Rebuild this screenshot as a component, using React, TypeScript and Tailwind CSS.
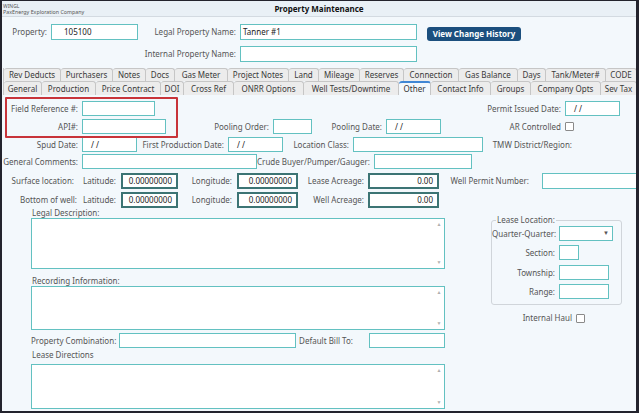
import React from "react";

type P = { className?: string; children?: React.ReactNode };

const Lbl = ({ className = "", children }: P) => (
  <div className={`shrink-0 whitespace-nowrap text-right text-[#555] ${className}`}>{children}</div>
);

const Inp = ({ className = "", children }: P) => (
  <div
    className={`shrink-0 h-full flex items-center bg-white border border-[#63c1c1] text-[#222] whitespace-nowrap ${className}`}
  >
    {children}
  </div>
);

const Num = ({ className = "", children }: P) => (
  <div
    className={`shrink-0 h-full flex items-center justify-end pr-[4px] bg-white border-2 border-[#3c7474] text-[#222] ${className}`}
  >
    {children}
  </div>
);

const Check = ({ className = "" }: P) => (
  <div className={`shrink-0 w-[9px] h-[9px] bg-white border border-[#8a8a8a] rounded-[1px] ${className}`} />
);

const Area = ({ className = "" }: P) => (
  <div className={`w-[414px] shrink-0 flex justify-end bg-white border border-[#63c1c1] ${className}`}>
    <div className="w-[10px] flex flex-col items-center justify-between py-[3px] text-[5px] leading-none text-[#b0b0b0]">
      <span>▲</span>
      <span>▼</span>
    </div>
  </div>
);

const tabsTop: [string, string][] = [
  ["Rev Deducts", "w-[57px]"],
  ["Purchasers", "w-[52px]"],
  ["Notes", "w-[33px]"],
  ["Docs", "w-[29px]"],
  ["Gas Meter", "w-[53px]"],
  ["Project Notes", "w-[61px]"],
  ["Land", "w-[30px]"],
  ["Mileage", "w-[41px]"],
  ["Reserves", "w-[44px]"],
  ["Connection", "w-[55px]"],
  ["Gas Balance", "w-[59px]"],
  ["Days", "w-[28px]"],
  ["Tank/Meter#", "w-[60px]"],
  ["CODE", "w-[31px]"],
];

const tabsBottom: [string, string][] = [
  ["General", "w-[38px]"],
  ["Production", "w-[54px]"],
  ["Price Contract", "w-[65px]"],
  ["DOI", "w-[23px]"],
  ["Cross Ref", "w-[50px]"],
  ["ONRR Options", "w-[70px]"],
  ["Well Tests/Downtime", "w-[95px]"],
  ["Other", "w-[32px]"],
  ["Contact Info", "w-[60px]"],
  ["Groups", "w-[40px]"],
  ["Company Opts", "w-[70px]"],
  ["Sev Tax", "w-[36px]"],
];

const Tab = ({ label, w, active }: { label: string; w: string; active?: boolean }) => (
  <div
    className={`${w} shrink-0 h-full flex items-center justify-center whitespace-nowrap border-r border-t border-[#c6c6c6] rounded-t-[3px] ${
      active ? "bg-[#f3f8fc] border-t-2 border-t-[#3f86d4] text-[#333]" : "bg-[#ececec] text-[#3a3a3a]"
    }`}
  >
    {label}
  </div>
);

export default function App() {
  return (
    <div className="w-[639px] h-[413px] overflow-hidden flex flex-col border-t border-l-2 border-r-[3px] border-b-2 border-[#23232d] bg-[#f3f8fc] font-['Noto_Sans',sans-serif] text-[8px] text-[#333]">
      {/* title bar */}
      <div className="h-[16px] shrink-0 grid grid-cols-[1fr_auto_1fr] items-center bg-[#e9f0f6] border-b border-[#d3dae1]">
        <div className="pl-[1px] flex flex-col leading-[6px] text-[#555]">
          <span className="text-[5px]">WINGL</span>
          <span className="text-[5.3px]">PaxEnergy Exploration Company</span>
        </div>
        <div className="font-bold text-[8px] text-[#111]">Property Maintenance</div>
        <div />
      </div>

      {/* property header */}
      <div className="flex items-start h-[16px] mt-[7px]">
        <Lbl className="w-[45px] self-center">Property:</Lbl>
        <Inp className="ml-[4px] w-[87px] pl-[12px]">105100</Inp>
        <Lbl className="w-[98px] self-center">Legal Property Name:</Lbl>
        <Inp className="ml-[4px] w-[177px] pl-[2px]">Tanner #1</Inp>
        <div className="ml-[10px] mt-[3px] w-[94px] h-[14px] rounded-[3px] bg-[#1b4f7e] text-white font-bold flex items-center justify-center">
          View Change History
        </div>
      </div>
      <div className="flex items-center h-[16px] mt-[6px]">
        <Lbl className="w-[234px]">Internal Property Name:</Lbl>
        <Inp className="ml-[4px] w-[177px]" />
      </div>

      {/* tabs */}
      <div className="flex h-[13px] mt-[6px] ml-[1px]">
        {tabsTop.map(([l, w], i) => (
          <div key={l} className={i === 0 ? "h-full flex border-l border-[#c6c6c6]" : "h-full flex"}>
            <Tab label={l} w={w} />
          </div>
        ))}
      </div>
      <div className="flex h-[14px] ml-[1px]">
        {tabsBottom.map(([l, w], i) => (
          <div key={l} className={i === 0 ? "h-full flex border-l border-[#c6c6c6]" : "h-full flex"}>
            <Tab label={l} w={w} active={l === "Other"} />
          </div>
        ))}
      </div>

      {/* panel */}
      <div className="relative flex-1 flex flex-col pt-[6px]">
        <div className="absolute left-[3px] top-[2px] w-[173px] h-[41px] border-2 border-[#c8343a] rounded-[1px]" />

        <div className="flex items-center h-[15px]">
          <Lbl className="w-[76px]">Field Reference #:</Lbl>
          <Inp className="ml-[4px] w-[73px]" />
          <Lbl className="w-[406px]">Permit Issued Date:</Lbl>
          <Inp className="ml-[4px] w-[55px] pl-[8px]">/ /</Inp>
        </div>

        <div className="flex items-center h-[15px] mt-[3px]">
          <Lbl className="w-[76px]">API#:</Lbl>
          <Inp className="ml-[4px] w-[84px]" />
          <Lbl className="w-[103px]">Pooling Order:</Lbl>
          <Inp className="ml-[4px] w-[39px]" />
          <Lbl className="w-[70px]">Pooling Date:</Lbl>
          <Inp className="ml-[4px] w-[55px] pl-[8px]">/ /</Inp>
          <Lbl className="w-[120px]">AR Controlled</Lbl>
          <Check className="ml-[4px]" />
        </div>

        <div className="flex items-center h-[15px] mt-[3px]">
          <Lbl className="w-[76px]">Spud Date:</Lbl>
          <Inp className="ml-[4px] w-[55px] pl-[8px]">/ /</Inp>
          <Lbl className="w-[87px]">First Production Date:</Lbl>
          <Inp className="ml-[4px] w-[55px] pl-[8px]">/ /</Inp>
          <Lbl className="w-[66px]">Location Class:</Lbl>
          <Inp className="ml-[4px] w-[130px]" />
          <Lbl className="w-[89px]">TMW District/Region:</Lbl>
        </div>

        <div className="flex items-center h-[15px] mt-[2px]">
          <Lbl className="w-[76px]">General Comments:</Lbl>
          <Inp className="ml-[4px] w-[175px]" />
          <Lbl className="w-[113px]">Crude Buyer/Pumper/Gauger:</Lbl>
          <Inp className="ml-[4px] w-[98px]" />
        </div>

        <div className="flex items-center h-[16px] mt-[4px]">
          <Lbl className="w-[72px]">Surface location:</Lbl>
          <Lbl className="w-[42px]">Latitude:</Lbl>
          <Num className="ml-[5px] w-[57px]">0.00000000</Num>
          <Lbl className="w-[54px]">Longitude:</Lbl>
          <Num className="ml-[5px] w-[61px]">0.00000000</Num>
          <Lbl className="w-[66px]">Lease Acreage:</Lbl>
          <Num className="ml-[4px] w-[71px]">0.00</Num>
          <Lbl className="w-[90px]">Well Permit Number:</Lbl>
          <Inp className="ml-[13px] w-[110px]" />
        </div>

        <div className="flex items-center h-[16px] mt-[3px]">
          <Lbl className="w-[75px]">Bottom of well:</Lbl>
          <Lbl className="w-[39px]">Latitude:</Lbl>
          <Num className="ml-[5px] w-[57px]">0.00000000</Num>
          <Lbl className="w-[54px]">Longitude:</Lbl>
          <Num className="ml-[5px] w-[61px]">0.00000000</Num>
          <Lbl className="w-[66px]">Well Acreage:</Lbl>
          <Num className="ml-[4px] w-[71px]">0.00</Num>
        </div>

        <div className="flex">
          {/* left column */}
          <div className="ml-[29px] flex flex-col w-[414px] text-[#555]">
            <div className="h-[10px] leading-[10px] pl-[1px]">Legal Description:</div>
            <Area className="h-[51px]" />
            <div className="h-[11px] leading-[11px] mt-[6px] pl-[1px]">Recording Information:</div>
            <Area className="h-[44px]" />
            <div className="flex items-center h-[15px] mt-[3px]">
              <Lbl className="w-[84px] text-left">Property Combination:</Lbl>
              <Inp className="ml-[4px] w-[177px]" />
              <Lbl className="w-[57px]">Default Bill To:</Lbl>
              <Inp className="ml-[16px] w-[76px]" />
            </div>
            <div className="h-[10px] leading-[10px] mt-[2px] pl-[1px]">Lease Directions</div>
            <Area className="h-[45px] mt-[4px]" />
          </div>

          {/* right column */}
          <div className="ml-[46px] mt-[7px] flex flex-col w-[131px]">
            <fieldset className="border border-[#d0d5da] rounded-[3px] pb-[5px]">
              <legend className="ml-[4px] px-[1px] leading-[10px] text-[#555]">Lease Location:</legend>
              <div className="flex items-center h-[15px] mt-[1px]">
                <Lbl className="w-[63px]">Quarter-Quarter:</Lbl>
                <Inp className="ml-[4px] w-[54px] justify-end pr-[3px]">
                  <span className="text-[6px] text-[#555]">▼</span>
                </Inp>
              </div>
              <div className="flex items-center h-[15px] mt-[4px]">
                <Lbl className="w-[63px]">Section:</Lbl>
                <Inp className="ml-[4px] w-[20px]" />
              </div>
              <div className="flex items-center h-[15px] mt-[5px]">
                <Lbl className="w-[63px]">Township:</Lbl>
                <Inp className="ml-[4px] w-[50px]" />
              </div>
              <div className="flex items-center h-[15px] mt-[4px]">
                <Lbl className="w-[63px]">Range:</Lbl>
                <Inp className="ml-[4px] w-[50px]" />
              </div>
            </fieldset>
            <div className="flex items-center h-[10px] mt-[8px]">
              <Lbl className="w-[81px]">Internal Haul</Lbl>
              <Check className="ml-[4px]" />
            </div>
          </div>
        </div>
      </div>
    </div>
  );
}
